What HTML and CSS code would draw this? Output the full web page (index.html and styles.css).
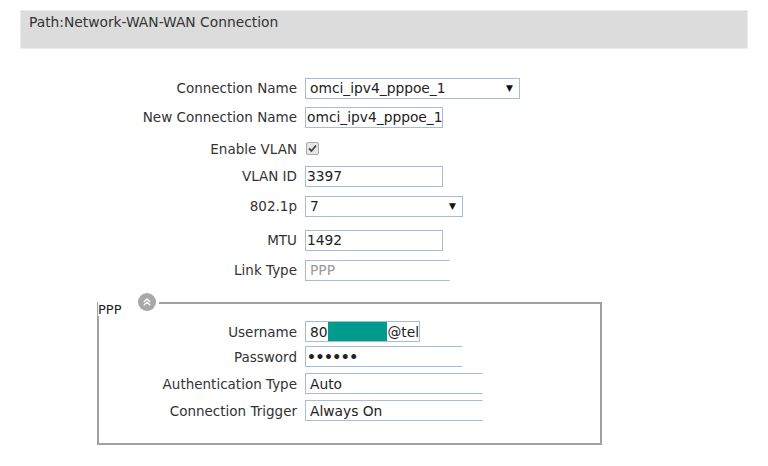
FILE: index.html
```html
<!DOCTYPE html>
<html>
<head>
<meta charset="utf-8">
<link rel="stylesheet" href="styles.css">
</head>
<body>
<div class="path">Path:Network-WAN-WAN Connection</div>
<div class="form">
  <div class="row r-conn"><label>Connection Name</label><div class="select w215"><span>omci_ipv4_pppoe_1</span><span class="arrow">▼</span></div></div>
  <div class="row r-new"><label>New Connection Name</label><div class="input w138 tight">omci_ipv4_pppoe_1</div></div>
  <div class="row r-vlan"><label>Enable VLAN</label><span class="check"><svg width="9" height="9" viewBox="0 0 9 9"><path d="M1 4.5 L3.5 7 L8 1.5" fill="none" stroke="#444" stroke-width="1.8"/></svg></span></div>
  <div class="row r-vid"><label>VLAN ID</label><div class="input w138 tight">3397</div></div>
  <div class="row r-8021"><label>802.1p</label><div class="select w158"><span>7</span><span class="arrow">▼</span></div></div>
  <div class="row r-mtu"><label>MTU</label><div class="input w138 tight">1492</div></div>
  <div class="row r-link"><label>Link Type</label><div class="input w145 open grey">PPP</div></div>
</div>
<fieldset class="ppp">
  <legend><span class="ltext">PPP</span><span class="toggle"><svg width="18" height="18" viewBox="0 0 18 18"><circle cx="9" cy="9" r="9" fill="#a8a8a8"/><path d="M5.8 9 L9 6 L12.2 9 M5.8 12.2 L9 9.2 L12.2 12.2" fill="none" stroke="#fff" stroke-width="1.4"/></svg></span></legend>
  <div class="row p-user"><label>Username</label><div class="input w115">80<span class="mask"></span>@tel</div></div>
  <div class="row p-pass"><label>Password</label><div class="input w158 open dots">••••••</div></div>
  <div class="row p-auth"><label>Authentication Type</label><div class="input w178 open">Auto</div></div>
  <div class="row p-trig"><label>Connection Trigger</label><div class="input w178 open">Always On</div></div>
</fieldset>
</body>
</html>
```
FILE: styles.css
```css
* { box-sizing: border-box; }
body {
  margin: 0;
  background: #fff;
  font-family: "DejaVu Sans", Verdana, sans-serif;
  font-size: 13.5px;
  color: #333;
}
.path {
  margin: 10px 20px 0 20px;
  height: 39px;
  background: #dcdcdc;
  border: 1px solid #ececec;
  padding: 3px 0 0 8px;
  font-size: 13.8px;
  color: #333;
}
.form {
  padding-top: 29px;
}
.row {
  display: flex;
  align-items: center;
  height: 20px;
}
.row label {
  width: 297px;
  text-align: right;
  margin-right: 8px;
  color: #333;
}
.r-new { margin-top: 9px; }
.r-vlan { margin-top: 15px; height: 13px; }
.r-vid { margin-top: 11px; }
.r-8021 { margin-top: 10px; }
.r-mtu { margin-top: 14px; }
.r-link { margin-top: 10px; }

.input, .select {
  height: 21px;
  border: 1px solid #a6bdd3;
  display: flex;
  align-items: center;
  padding-left: 4px;
  white-space: nowrap;
  overflow: hidden;
  color: #222;
  font-size: 13.8px;
}
.select { justify-content: space-between; padding-right: 6px; }
.arrow { font-size: 9px; color: #111; }
.tight { padding-left: 1px; }
.open { border-right-color: transparent; }
.grey { color: #999; }
.w215 { width: 215px; }
.w138 { width: 138px; }
.w145 { width: 145px; }
.w158 { width: 158px; }
.w115 { width: 115px; }
.w178 { width: 178px; }
.check {
  width: 13px;
  height: 13px;
  border: 1px solid #aaa;
  border-radius: 2px;
  background: #e6e6e6;
  display: flex;
  align-items: center;
  justify-content: center;
  margin-left: 1px;
}
.ppp {
  margin: 10px 0 0 97px;
  width: 505px;
  height: 155px;
  border: 2px solid #a0a0a0;
  padding: 0;
  min-width: 0;
}
.ppp legend {
  padding: 0 3px 0 0;
  margin-left: -1px;
  height: 26px;
  display: flex;
  align-items: flex-start;
}
.ltext { font-size: 13px; color: #222; margin-top: 12px; }
.toggle { margin-left: 16px; margin-top: 3px; display: flex; }
.ppp .row { height: 21px; }
.ppp .row label { width: 198px; }
.p-user { margin-top: 5px; }
.p-pass { margin-top: 4px; }
.p-auth { margin-top: 6px; }
.p-trig { margin-top: 6px; }
.mask {
  display: inline-block;
  width: 65px;
  height: 19px;
  background: #009a8e;
}
.dots { padding-left: 1px; font-size: 14px; font-weight: bold; letter-spacing: -0.5px; }
```
